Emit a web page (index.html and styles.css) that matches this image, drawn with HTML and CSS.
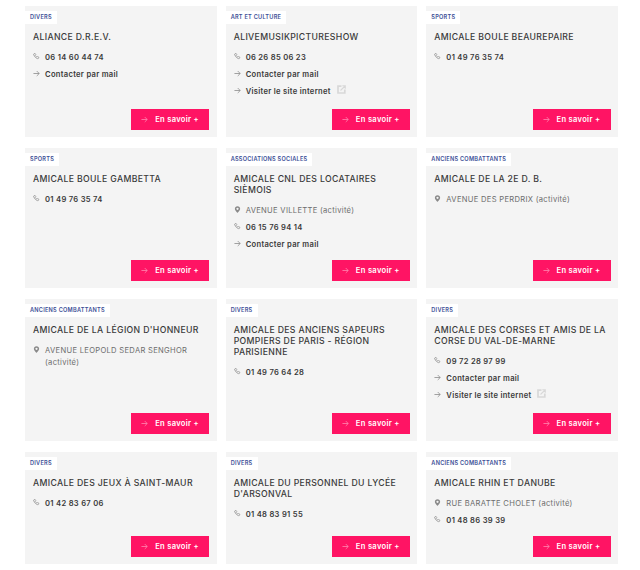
FILE: index.html
```html
<!DOCTYPE html>
<html lang="fr">
<head>
<meta charset="utf-8">
<title>Associations</title>
<link rel="stylesheet" href="styles.css">
</head>
<body>
<svg class="defs" width="0" height="0" aria-hidden="true">
  <symbol id="i-phone" viewBox="0 0 8 8"><path d="M1.2.8 2.4.5l.8 1.4-.7.8c.4.9 1.1 1.6 2 2l.8-.7 1.4.8-.3 1.2c-.2.5-.6.6-1 .5C3.500 6.200 1.800 4.500.7 1.800.6 1.400.7 1 1.200.8Z" fill="none" stroke="currentColor" stroke-width=".8"/></symbol>
  <symbol id="i-arrow" viewBox="0 0 8 8"><path d="M.5 4h6.500M4.300 1.200 7.100 4 4.300 6.800" fill="none" stroke="currentColor" stroke-width=".9"/></symbol>
  <symbol id="i-pin" viewBox="0 0 8 8"><path fill-rule="evenodd" d="M4 .2C2.200.2 1 1.500 1 3.200 1 5.200 4 7.900 4 7.900s3-2.700 3-4.700C7 1.500 5.800.2 4 .2Zm0 1.700a1.300 1.300 0 1 1 0 2.600 1.300 1.300 0 0 1 0-2.600Z" fill="currentColor"/></symbol>
  <symbol id="i-ext" viewBox="0 0 9 9"><path d="M4.500 1.200H1v6.800h6.800V4.500" fill="none" stroke="currentColor" stroke-width="1.700"/><path d="M3.500 5.500 8 1M5.300.7h3v3" fill="none" stroke="currentColor" stroke-width="1.100"/></symbol>
</svg>
<main class="grid">

<article class="card"><span class="tag">DIVERS</span><h2 class="title">ALIANCE D.R.E.V.</h2>
<ul class="info">
<li class="row strong"><svg class="ico"><use href="#i-phone"/></svg>06 14 60 44 74</li>
<li class="row strong"><svg class="ico"><use href="#i-arrow"/></svg>Contacter par mail</li>
</ul>
<a class="btn"><svg class="btn-ico"><use href="#i-arrow"/></svg>En savoir +</a></article>

<article class="card"><span class="tag">ART ET CULTURE</span><h2 class="title">ALIVEMUSIKPICTURESHOW</h2>
<ul class="info">
<li class="row strong"><svg class="ico"><use href="#i-phone"/></svg>06 26 85 06 23</li>
<li class="row strong"><svg class="ico"><use href="#i-arrow"/></svg>Contacter par mail</li>
<li class="row strong row-site"><svg class="ico"><use href="#i-arrow"/></svg>Visiter le site internet<svg class="ext"><use href="#i-ext"/></svg></li>
</ul>
<a class="btn"><svg class="btn-ico"><use href="#i-arrow"/></svg>En savoir +</a></article>

<article class="card"><span class="tag">SPORTS</span><h2 class="title">AMICALE BOULE BEAUREPAIRE</h2>
<ul class="info">
<li class="row strong"><svg class="ico"><use href="#i-phone"/></svg>01 49 76 35 74</li>
</ul>
<a class="btn"><svg class="btn-ico"><use href="#i-arrow"/></svg>En savoir +</a></article>

<article class="card"><span class="tag">SPORTS</span><h2 class="title">AMICALE BOULE GAMBETTA</h2>
<ul class="info">
<li class="row strong"><svg class="ico"><use href="#i-phone"/></svg>01 49 76 35 74</li>
</ul>
<a class="btn"><svg class="btn-ico"><use href="#i-arrow"/></svg>En savoir +</a></article>

<article class="card"><span class="tag">ASSOCIATIONS SOCIALES</span><h2 class="title">AMICALE CNL DES LOCATAIRES SIÈMOIS</h2>
<ul class="info">
<li class="row"><svg class="ico"><use href="#i-pin"/></svg>AVENUE VILLETTE (activité)</li>
<li class="row strong"><svg class="ico"><use href="#i-phone"/></svg>06 15 76 94 14</li>
<li class="row strong"><svg class="ico"><use href="#i-arrow"/></svg>Contacter par mail</li>
</ul>
<a class="btn"><svg class="btn-ico"><use href="#i-arrow"/></svg>En savoir +</a></article>

<article class="card"><span class="tag">ANCIENS COMBATTANTS</span><h2 class="title">AMICALE DE LA 2E D. B.</h2>
<ul class="info">
<li class="row"><svg class="ico"><use href="#i-pin"/></svg>AVENUE DES PERDRIX (activité)</li>
</ul>
<a class="btn"><svg class="btn-ico"><use href="#i-arrow"/></svg>En savoir +</a></article>

<article class="card"><span class="tag">ANCIENS COMBATTANTS</span><h2 class="title">AMICALE DE LA LÉGION D'HONNEUR</h2>
<ul class="info">
<li class="row"><svg class="ico"><use href="#i-pin"/></svg><span>AVENUE LEOPOLD SEDAR SENGHOR (activité)</span></li>
</ul>
<a class="btn"><svg class="btn-ico"><use href="#i-arrow"/></svg>En savoir +</a></article>

<article class="card"><span class="tag">DIVERS</span><h2 class="title">AMICALE DES ANCIENS SAPEURS POMPIERS DE PARIS - RÉGION PARISIENNE</h2>
<ul class="info">
<li class="row strong"><svg class="ico"><use href="#i-phone"/></svg>01 49 76 64 28</li>
</ul>
<a class="btn"><svg class="btn-ico"><use href="#i-arrow"/></svg>En savoir +</a></article>

<article class="card"><span class="tag">DIVERS</span><h2 class="title">AMICALE DES CORSES ET AMIS DE LA CORSE DU VAL-DE-MARNE</h2>
<ul class="info">
<li class="row strong"><svg class="ico"><use href="#i-phone"/></svg>09 72 28 97 99</li>
<li class="row strong"><svg class="ico"><use href="#i-arrow"/></svg>Contacter par mail</li>
<li class="row strong row-site"><svg class="ico"><use href="#i-arrow"/></svg>Visiter le site internet<svg class="ext"><use href="#i-ext"/></svg></li>
</ul>
<a class="btn"><svg class="btn-ico"><use href="#i-arrow"/></svg>En savoir +</a></article>

<article class="card"><span class="tag">DIVERS</span><h2 class="title">AMICALE DES JEUX À SAINT-MAUR</h2>
<ul class="info">
<li class="row strong"><svg class="ico"><use href="#i-phone"/></svg>01 42 83 67 06</li>
</ul>
<a class="btn"><svg class="btn-ico"><use href="#i-arrow"/></svg>En savoir +</a></article>

<article class="card"><span class="tag">DIVERS</span><h2 class="title">AMICALE DU PERSONNEL DU LYCÉE D'ARSONVAL</h2>
<ul class="info">
<li class="row strong"><svg class="ico"><use href="#i-phone"/></svg>01 48 83 91 55</li>
</ul>
<a class="btn"><svg class="btn-ico"><use href="#i-arrow"/></svg>En savoir +</a></article>

<article class="card"><span class="tag">ANCIENS COMBATTANTS</span><h2 class="title">AMICALE RHIN ET DANUBE</h2>
<ul class="info">
<li class="row"><svg class="ico"><use href="#i-pin"/></svg>RUE BARATTE CHOLET (activité)</li>
<li class="row strong"><svg class="ico"><use href="#i-phone"/></svg>01 48 86 39 39</li>
</ul>
<a class="btn"><svg class="btn-ico"><use href="#i-arrow"/></svg>En savoir +</a></article>

</main>
</body>
</html>
```
FILE: styles.css
```css
html, body { margin: 0; padding: 0; background: #fff; }
body { font-family: Inter, "Noto Sans", sans-serif; color: #3a3a3a; overflow: hidden; height: 570px; }
.defs { position: absolute; }
.grid {
  display: grid;
  grid-template-columns: repeat(3, 1fr);
  column-gap: 9px;
  row-gap: 10.75px;
  padding: 6px 22px 0 25px;
}
.card {
  display: flex;
  flex-direction: column;
  align-items: flex-start;
  background: #f4f4f4;
  padding: 5px 7.5px 7.5px 8px;
}
.tag {
  margin-left: -8px;
  height: 13px;
  line-height: 13px;
  padding: 0 5px;
  background: #fff;
  color: #3b4e96;
  font-size: 5.6px;
  font-weight: 600;
  letter-spacing: .25px;
}
.title {
  margin: 8px 0 0;
  font-size: 8.700px;
  line-height: 11px;
  font-weight: 500;
  color: #3a3a3a;
  letter-spacing: .34px;
}
.info { list-style: none; margin: 6px 0 7px; padding: 0; width: 100%; }
.row {
  display: flex;
  align-items: flex-start;
  min-height: 17px;
  font-size: 7.600px;
  line-height: 12px;
  padding-top: 3px;
  box-sizing: border-box;
  color: #6d6d6d;
  letter-spacing: .3px;
}
.row-site { min-height: 18.5px; }
.strong { font-weight: 600; color: #3a3a3a; }
.ico { flex: none; width: 7px; height: 7px; margin: 1px 5px 0 0; color: #8a8a8a; }
.ext { flex: none; width: 9px; height: 9px; margin: -1px 0 0 6px; color: #d8d8d8; }
.btn {
  display: flex;
  align-items: center;
  box-sizing: border-box;
  align-self: flex-end;
  margin-top: auto;
  width: 78px;
  height: 21px;
  padding-left: 10px;
  background: #ff1464;
  color: #fff;
  font-size: 7.600px;
  font-weight: 600;
  letter-spacing: .3px;
}
.btn-ico { width: 7px; height: 7px; margin-right: 7px; color: #ff8ab2; }
```
